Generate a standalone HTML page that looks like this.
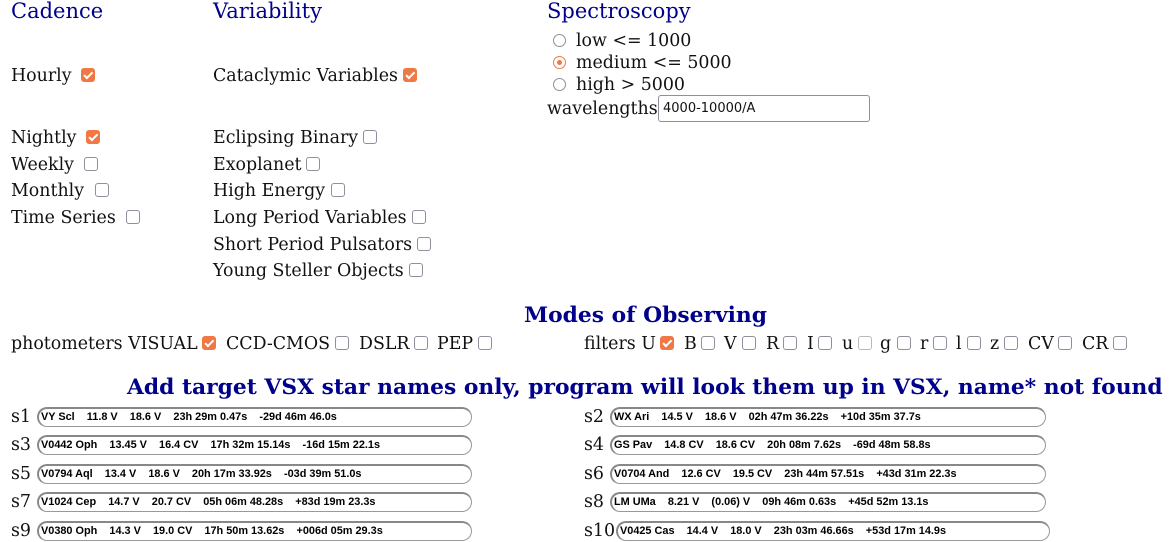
<!DOCTYPE html>
<html><head><meta charset="utf-8"><style>
body{margin:0;width:1176px;height:542px;background:#fff;position:relative;overflow:hidden;font-family:"DejaVu Serif",serif;color:#111}
.t{position:absolute;font-size:17.4px;line-height:20px;white-space:pre;margin-top:1px}
.h{position:absolute;font-size:21px;line-height:24px;color:#00008b;white-space:pre}
.b{position:absolute;font-size:21.8px;line-height:24px;color:#00008b;font-weight:bold;white-space:pre;margin-top:1px}
.c{position:absolute;width:12px;height:12px;border:1.5px solid #8f8f9d;border-radius:3px;background:#fff;margin-top:1px}
.c.on{background:#f07844;border-color:#f07844}
.c.on::after{content:"";position:absolute;left:4px;top:1px;width:3px;height:6.5px;border:solid #fff;border-width:0 2px 2px 0;transform:rotate(45deg)}
.r{position:absolute;width:11px;height:11px;border:1.5px solid #8f8f9d;border-radius:50%;margin-top:1px}
.r.on{border-color:#f07844}
.r.on::after{content:"";position:absolute;left:3px;top:3px;width:5px;height:5px;border-radius:50%;background:#f07844}
.in{position:absolute;height:17px;border:1px solid #999;border-top:2px solid #888;border-left:2px solid #888;border-radius:10px;font-family:"Liberation Sans",sans-serif;font-weight:bold;font-size:10.9px;line-height:17px;padding-left:2px;white-space:pre;color:#000;box-sizing:content-box}
</style></head><body>
<div class="h" style="left:11px;top:-1px">Cadence</div>
<div class="h" style="left:213px;top:-1px">Variability</div>
<div class="h" style="left:547px;top:-1px">Spectroscopy</div>

<div class="t" style="left:11px;top:65px">Hourly</div><div class="c on" style="left:81px;top:67px"></div>
<div class="t" style="left:11px;top:127px">Nightly</div><div class="c on" style="left:86px;top:129px"></div>
<div class="t" style="left:11px;top:154px">Weekly</div><div class="c" style="left:84px;top:156px"></div>
<div class="t" style="left:11px;top:180px">Monthly</div><div class="c" style="left:95px;top:182px"></div>
<div class="t" style="left:11px;top:207px">Time Series</div><div class="c" style="left:126px;top:209px"></div>

<div class="t" style="left:213px;top:65px">Cataclymic Variables</div><div class="c on" style="left:403px;top:67px"></div>
<div class="t" style="left:213px;top:127px">Eclipsing Binary</div><div class="c" style="left:363px;top:129px"></div>
<div class="t" style="left:213px;top:154px">Exoplanet</div><div class="c" style="left:306px;top:156px"></div>
<div class="t" style="left:213px;top:180px">High Energy</div><div class="c" style="left:331px;top:182px"></div>
<div class="t" style="left:213px;top:207px">Long Period Variables</div><div class="c" style="left:412px;top:209px"></div>
<div class="t" style="left:213px;top:234px">Short Period Pulsators</div><div class="c" style="left:417px;top:236px"></div>
<div class="t" style="left:213px;top:260px">Young Steller Objects</div><div class="c" style="left:409px;top:262px"></div>

<div class="r" style="left:553px;top:33px"></div><div class="t" style="left:576px;top:30px">low &lt;= 1000</div>
<div class="r on" style="left:553px;top:55px"></div><div class="t" style="left:576px;top:52px">medium &lt;= 5000</div>
<div class="r" style="left:553px;top:77px"></div><div class="t" style="left:576px;top:74px">high &gt; 5000</div>
<div class="t" style="left:547px;top:98px">wavelengths</div>
<div style="position:absolute;left:658px;top:95px;width:212px;height:27px;border:1px solid #8f8f9d;border-radius:3px;font-family:'DejaVu Sans',sans-serif;font-size:13px;line-height:25px;padding-left:4px;box-sizing:border-box">4000-10000/A</div>

<div class="b" style="left:524px;top:303px">Modes of Observing</div>
<div class="t" style="left:11px;top:333px">photometers VISUAL</div><div class="c on" style="left:202px;top:335px"></div>
<div class="t" style="left:226px;top:333px">CCD-CMOS</div><div class="c" style="left:335px;top:335px"></div>
<div class="t" style="left:359px;top:333px">DSLR</div><div class="c" style="left:414px;top:335px"></div>
<div class="t" style="left:437px;top:333px">PEP</div><div class="c" style="left:478px;top:335px"></div>

<div class="t" style="left:584px;top:333px">filters U</div><div class="c on" style="left:660px;top:335px"></div>
<div class="t" style="left:684px;top:333px">B</div><div class="c" style="left:701px;top:335px"></div>
<div class="t" style="left:724px;top:333px">V</div><div class="c" style="left:742px;top:335px"></div>
<div class="t" style="left:766px;top:333px">R</div><div class="c" style="left:783px;top:335px"></div>
<div class="t" style="left:807px;top:333px">I</div><div class="c" style="left:818px;top:335px"></div>
<div class="t" style="left:842px;top:333px">u</div><div class="c" style="left:858px;top:335px;border-color:#b8b8c0"></div>
<div class="t" style="left:880px;top:333px">g</div><div class="c" style="left:897px;top:335px"></div>
<div class="t" style="left:920px;top:333px">r</div><div class="c" style="left:933px;top:335px"></div>
<div class="t" style="left:956px;top:333px">l</div><div class="c" style="left:967px;top:335px"></div>
<div class="t" style="left:990px;top:333px">z</div><div class="c" style="left:1004px;top:335px"></div>
<div class="t" style="left:1028px;top:333px">CV</div><div class="c" style="left:1058px;top:335px"></div>
<div class="t" style="left:1082px;top:333px">CR</div><div class="c" style="left:1113px;top:335px"></div>

<div class="b" style="left:127px;top:375px">Add target VSX star names only, program will look them up in VSX, name* not found</div>

<div class="t" style="left:11px;top:406px">s1</div><div class="in" style="left:37px;top:407px;width:430px">VY Scl    11.8 V    18.6 V    23h 29m 0.47s    -29d 46m 46.0s</div>
<div class="t" style="left:11px;top:434px">s3</div><div class="in" style="left:37px;top:435px;width:430px">V0442 Oph    13.45 V    16.4 CV    17h 32m 15.14s    -16d 15m 22.1s</div>
<div class="t" style="left:11px;top:463px">s5</div><div class="in" style="left:37px;top:464px;width:430px">V0794 Aql    13.4 V    18.6 V    20h 17m 33.92s    -03d 39m 51.0s</div>
<div class="t" style="left:11px;top:491px">s7</div><div class="in" style="left:37px;top:492px;width:430px">V1024 Cep    14.7 V    20.7 CV    05h 06m 48.28s    +83d 19m 23.3s</div>
<div class="t" style="left:11px;top:520px">s9</div><div class="in" style="left:37px;top:521px;width:430px">V0380 Oph    14.3 V    19.0 CV    17h 50m 13.62s    +006d 05m 29.3s</div>

<div class="t" style="left:584px;top:406px">s2</div><div class="in" style="left:610px;top:407px;width:431px">WX Ari    14.5 V    18.6 V    02h 47m 36.22s    +10d 35m 37.7s</div>
<div class="t" style="left:584px;top:434px">s4</div><div class="in" style="left:610px;top:435px;width:431px">GS Pav    14.8 CV    18.6 CV    20h 08m 7.62s    -69d 48m 58.8s</div>
<div class="t" style="left:584px;top:463px">s6</div><div class="in" style="left:610px;top:464px;width:431px">V0704 And    12.6 CV    19.5 CV    23h 44m 57.51s    +43d 31m 22.3s</div>
<div class="t" style="left:584px;top:491px">s8</div><div class="in" style="left:610px;top:492px;width:431px">LM UMa    8.21 V    (0.06) V    09h 46m 0.63s    +45d 52m 13.1s</div>
<div class="t" style="left:584px;top:520px">s10</div><div class="in" style="left:616px;top:521px;width:429px">V0425 Cas    14.4 V    18.0 V    23h 03m 46.66s    +53d 17m 14.9s</div>
</body></html>
